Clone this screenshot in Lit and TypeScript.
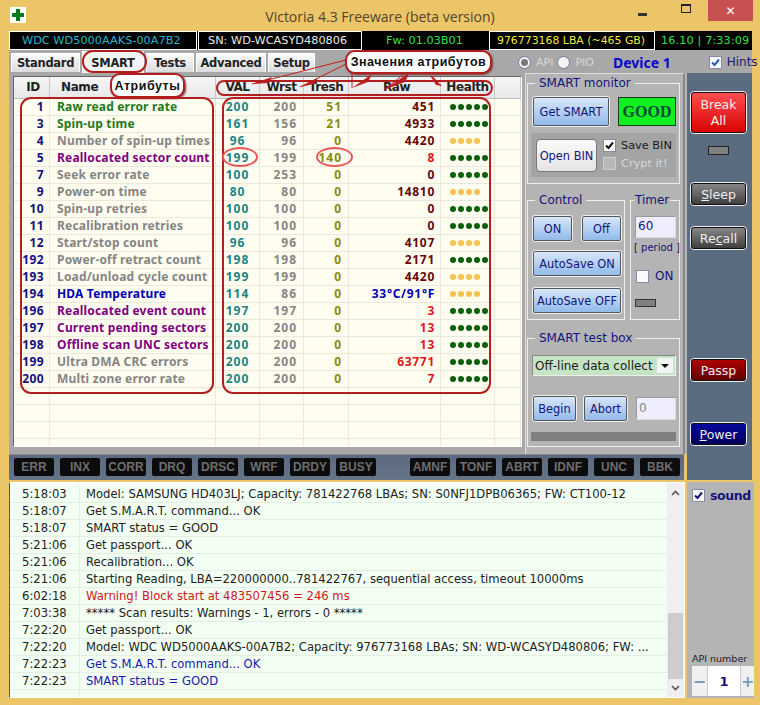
import { LitElement, html, css } from "lit";
import { customElement } from "lit/decorators.js";

type Row = [string, string, string, string, string, string, string, string, string];
const G = "#1c7a1c", N = "#858585", P = "#800080", B = "#0000b4", D = "#650808", R = "#e01818", Q = "#0000b4";
const rows: Row[] = [
  ["1", "Raw read error rate", G, "200", "200", "51", "451", D, "g"],
  ["3", "Spin-up time", G, "161", "156", "21", "4933", D, "g"],
  ["4", "Number of spin-up times", N, "96", "96", "0", "4420", D, "y"],
  ["5", "Reallocated sector count", P, "199", "199", "140", "8", R, "g"],
  ["7", "Seek error rate", N, "100", "253", "0", "0", D, "g"],
  ["9", "Power-on time", N, "80", "80", "0", "14810", D, "y"],
  ["10", "Spin-up retries", N, "100", "100", "0", "0", D, "g"],
  ["11", "Recalibration retries", N, "100", "100", "0", "0", D, "g"],
  ["12", "Start/stop count", N, "96", "96", "0", "4107", D, "y"],
  ["192", "Power-off retract count", N, "198", "198", "0", "2171", D, "g"],
  ["193", "Load/unload cycle count", N, "199", "199", "0", "4420", D, "y"],
  ["194", "HDA Temperature", B, "114", "86", "0", "33°C/91°F", Q, "y"],
  ["196", "Reallocated event count", P, "197", "197", "0", "3", R, "g"],
  ["197", "Current pending sectors", P, "200", "200", "0", "13", R, "g"],
  ["198", "Offline scan UNC sectors", P, "200", "200", "0", "13", R, "g"],
  ["199", "Ultra DMA CRC errors", N, "200", "200", "0", "63771", R, "g"],
  ["200", "Multi zone error rate", N, "200", "200", "0", "7", R, "g"],
];
const logs: [string, string, string][] = [
  ["5:18:03", "Model: SAMSUNG HD403LJ; Capacity: 781422768 LBAs; SN: S0NFJ1DPB06365; FW: CT100-12", "#222"],
  ["5:18:07", "Get S.M.A.R.T. command... OK", "#222"],
  ["5:18:07", "SMART status = GOOD", "#222"],
  ["5:21:06", "Get passport... OK", "#222"],
  ["5:21:06", "Recalibration... OK", "#222"],
  ["5:21:06", "Starting Reading, LBA=220000000..781422767, sequential access, timeout 10000ms", "#222"],
  ["6:02:18", "Warning! Block start at 483507456 = 246 ms", "#d01818"],
  ["7:03:38", "***** Scan results: Warnings - 1, errors - 0 *****", "#222"],
  ["7:22:20", "Get passport... OK", "#222"],
  ["7:22:20", "Model: WDC WD5000AAKS-00A7B2; Capacity: 976773168 LBAs; SN: WD-WCASYD480806; FW: ...", "#222"],
  ["7:22:23", "Get S.M.A.R.T. command... OK", "#1818b0"],
  ["7:22:23", "SMART status = GOOD", "#1818b0"],
  ["", "", "#222"],
];
const flagsA = ["ERR", "INX", "CORR", "DRQ", "DRSC", "WRF", "DRDY", "BUSY"];
const flagsB = ["AMNF", "TONF", "ABRT", "IDNF", "UNC", "BBK"];

@customElement("app-root")
export class AppRoot extends LitElement {
  static styles = css`
    :host { display: block; width: 760px; height: 705px; font-family: "DejaVu Sans", sans-serif; }
    * { box-sizing: border-box; }
    .win { position: relative; width: 760px; height: 705px; padding: 0 8px 7px 9px; display: flex; flex-direction: column;
      background: #ecc568; overflow: hidden; }
    .title { height: 31px; display: flex; align-items: center; flex: none; position: relative; margin: 0 -8px 0 -9px; padding-left: 10px; color: #4a3a20; }
    .logo { width: 16px; height: 16px; background: #fff; display: grid; place-items: center; flex: none; margin-top: -2px; }
    .ttext { flex: 1; text-align: center; font: 14px "Open Sans", sans-serif; margin-left: 114px; margin-top: 1px; color: #54442c; white-space: nowrap; }
    .caps { display: flex; align-items: flex-start; height: 31px; }
    .cap { width: 44px; height: 21px; display: grid; place-items: center; }
    .cap.close { width: 45px; background: #c75050; margin-right: 7px; color: #fff; font: bold 12px "DejaVu Sans"; }
    .min { width: 9px; height: 3px; background: #333; margin-top: 7px; }
    .max { width: 10px; height: 9px; border: 1px solid #222; border-top-width: 2px; margin-top: -5px; }
    .status { height: 19px; flex: none; display: flex; background: #000; font-size: 11.3px; line-height: 17px; gap: 1px; }
    .status div { border: 1px solid #fff; border-bottom: none; padding-left: 12px; white-space: nowrap; overflow: hidden; }
    .status .s1 { width: 188px; color: #28b4c8; border-bottom: 1px solid #fff; padding-left: 12px; }
    .status .s2 { width: 164px; color: #e8e8e8; border-bottom: 1px solid #fff; padding-left: 9px; }
    .status .s3 { width: 125px; color: #30e040; border: none; padding-left: 23px; line-height: 19px; }
    .status .s4 { width: 166px; color: #f0e840; border-bottom: 1px solid #fff; padding-left: 7px; font-size: 10.9px; }
    .status .s5 { flex: 1; color: #30e040; border: none; padding-left: 5px; line-height: 19px; letter-spacing: 0.1px; }
    .tabs { height: 23px; flex: none; background: #a8a8a8; display: flex; align-items: flex-end; padding-left: 2px; position: relative; }
    .tab { flex: none; height: 19px; background: linear-gradient(#fafafa, #dcdcdc); border: 1px solid #fff; border-bottom: none; font: bold 11.5px "DejaVu Sans"; letter-spacing: -0.3px;
      color: #222; display: grid; place-items: center; margin-right: 2px; margin-bottom: 1px; }
    .tab.on { height: 22px; margin-bottom: 0; background: #f4f4f4; }
    .opts { flex: none; display: flex; align-items: center; margin-left: 201px; height: 22px; font-size: 11px; color: #d8d8d8; white-space: nowrap; }
    .radio { width: 13px; height: 13px; border-radius: 50%; background: #f4f4f4; border: 1px solid #6a7a9a; flex: none; display: grid; place-items: center; }
    .radio i { width: 7px; height: 7px; border-radius: 50%; background: #777; display: block; }
    .api-l { margin: 0 4px 0 5px; }
    .pio-l { margin-left: 5px; }
    .dev { font: bold 14px "Noto Sans", sans-serif; color: #0808c8; margin-left: 19px; white-space: nowrap; }
    .chk { width: 13px; height: 13px; background: #fafafa; border: 1px solid #88a; display: grid; place-items: center; flex: none; }
    .chk svg { width: 11px; height: 11px; display: block; }
    .hints { margin-left: 38px; display: flex; align-items: center; gap: 5px; color: #1a1a70; font-size: 12px; white-space: nowrap; }
    .upper { height: 407px; flex: none; display: flex; }
    .lc { width: 678px; flex: none; display: flex; flex-direction: column; }
    .main { height: 381px; display: flex; background: #b4b4b4; flex: none; }
    .tp { width: 516px; padding: 3px 3px 7px 4px; flex: none; background: #a8a8a8; }
    .table { height: 100%; background: #fffdf0; border: 1px solid #666; border-right-color: #fff; border-bottom-color: #fff; overflow: hidden; }
    .hd, .rw { display: grid; grid-template-columns: 36px 166px 44px 44px 45px 92px 54px 1fr; }
    .hd { height: 22px; background: linear-gradient(#f6f6f6, #e8e8e8); font: bold 12px "DejaVu Sans"; letter-spacing: -0.4px; color: #222; border-bottom: 1px solid #bbb; }
    .hd span { border-right: 1px solid #c8c8c8; text-align: center; line-height: 20px; white-space: nowrap; }
    .hd .hid { padding-left: 3px; }
    .hd .hnm { text-align: left; padding-left: 11px; }
    .hd .hr { padding-left: 4px; }
    .rw { height: 17px; font: bold 12px "Noto Sans", sans-serif; line-height: 16px; }
    .rw span { border-right: 1px solid #ece9dc; border-bottom: 1px solid #ece9dc; padding: 0 2px; white-space: nowrap; overflow: hidden; }
    .id { text-align: right; color: #101080; padding-right: 5px !important; letter-spacing: 0.4px; }
    .nm { padding-left: 7px !important; letter-spacing: 0.18px; }
    .v { text-align: center; color: #208484; letter-spacing: 1px; }
    .w { text-align: right; color: #858585; padding-right: 6px !important; letter-spacing: 1px; }
    .t { text-align: right; color: #8a8a10; padding-right: 6px !important; letter-spacing: 1px; }
    .r { text-align: right; padding-right: 5px !important; letter-spacing: 0.7px; }
    .hl { display: flex; gap: 2px; align-items: center; padding-left: 9px !important; }
    .hl i { width: 6px; height: 6px; border-radius: 50%; display: block; flex: none; }
    .hl.g i { background: #0a620a; }
    .hl.y i { background: #f8c24a; }
    .rp { width: 160px; flex: none; background: #b4b4b4; border-left: 1px solid #ddd; border-top: 1px solid #ddd; padding: 9px 5px 0 1px; display: flex; flex-direction: column; border-right: 2px solid #888; }
    .grp { border: 1px solid #eee; position: relative; }
    .lg { position: absolute; top: -9px; left: 7px; padding: 0 4px; background: #b4b4b4; color: #14147a; font-size: 12px; line-height: 16px; white-space: nowrap; }
    .btn { background: linear-gradient(#dbe8fa, #8fb8ea); border: 1px solid #f0f0f0; outline: 1px solid #555; outline-offset: -2px; border-radius: 3px;
      display: grid; place-items: center; color: #14147a; font-size: 11.4px; white-space: nowrap; flex: none; }
    .sm { height: 101px; padding: 12px 3px 0 4px; width: 153px; }
    .sr { display: flex; gap: 8px; align-items: center; }
    .good { width: 58px; height: 29px; background: #10f020; border: 1px solid #1a3a1a; color: #0a4a3a; font: bold 16px "Liberation Serif", serif; display: grid; place-items: center; }
    .sub { margin: 6px 0 0 -1px; height: 44px; background: #a4a4a4; display: flex; padding: 6px 4px 0 5px; gap: 6px; width: 145px; }
    .open { width: 61px; height: 33px; background: linear-gradient(#fafafa, #e4e4e4); border-radius: 4px; border: 1px solid #777; color: #14147a; font-size: 11.4px; display: grid; place-items: center; flex: none; white-space: nowrap; }
    .cks { display: flex; flex-direction: column; gap: 6px; font-size: 11.3px; color: #1a1a1a; }
    .ck { display: flex; gap: 5px; align-items: center; white-space: nowrap; height: 12px; }
    .ck.dis { color: #d8d8d8; }
    .ck.dis .chk { background: #b8b8b8; border-color: #ccc; }
    .two { display: flex; gap: 5px; margin-top: 16px; }
    .ctl { width: 98px; height: 120px; padding: 14px 2px 0 4px; display: flex; flex-direction: column; gap: 8px; }
    .ctl .h { display: flex; gap: 8px; }
    .tm { width: 50px; height: 120px; padding: 15px 4px 0 4px; }
    .in { background: #eeeeff; border: 1px solid #999; border-right-color: #ddd; border-bottom-color: #ddd; font-size: 12px; color: #14147a; padding-left: 2px; }
    .per { font-size: 10px; color: #14147a; margin: 4px -3px 0 -1px; white-space: nowrap; text-align: center; }
    .tm .ck { margin-top: 17px; margin-left: 1px; color: #14147a; font-size: 12px; gap: 6px; }
    .ind { background: #808080; border: 1px solid #333; height: 8px; }
    .st { margin-top: 18px; width: 153px; height: 109px; padding: 16px 3px 0 4px; }
    .sel { height: 21px; width: 144px; background: #c4e4c4; border: 1px solid #888; border-bottom-color: #eee; border-right-color: #eee; display: flex; align-items: center; font-size: 12px; color: #1a1a1a; padding-left: 2px; white-space: nowrap; position: relative; }
    .arr { position: absolute; right: 2px; top: 2px; width: 16px; height: 15px; background: #f4f4f4; display: grid; place-items: center; }
    .arr i { width: 0; height: 0; border: 4px solid transparent; border-top: 4px solid #111; border-bottom: none; display: block; }
    .tr { display: flex; margin-top: 19px; gap: 6px; align-items: center; }
    .bar { margin-top: 10px; height: 9px; background: #808080; width: 145px; margin-left: -1px; }
    .flags { flex: 1; background: linear-gradient(#5b6a80, #667488); padding: 3px 0 0 5px; display: flex; border-top: 1px solid #888; margin-right: 3px; }
    .fl { flex: none; width: 40px; height: 18px; background: #0c0c0c; border-radius: 2px; color: #6e6e6e; font: bold 12px "Liberation Sans", sans-serif; display: grid; place-items: center; margin-right: 6px; }
    .flags .gap { flex: none; width: 28px; }
    .slate { flex: 1; background: #5b6b80; display: flex; flex-direction: column; align-items: center; padding: 18px 2px 0 0; }
    .sb { width: 57px; height: 24px; border: 1px solid #eee; outline: 1px solid #111; outline-offset: -2px; border-radius: 4px; background: linear-gradient(#8a8a8a, #3c3c3c); color: #eee; display: grid; place-items: center; font-size: 12.5px; flex: none; }
    .sb u { text-decoration: underline; }
    .break { height: 43px; background: linear-gradient(#ff5050, #d80000); text-align: center; line-height: 16px; }
    .led { width: 21px; height: 9px; background: #808080; border: 1px solid #222; margin-top: 12px; flex: none; }
    .passp { background: linear-gradient(#b00000, #600000); }
    .power { background: linear-gradient(#0808a0, #000058); }
    .lower { flex: 1; min-height: 0; display: flex; }
    .log { width: 676px; flex: none; background: #f2fff2; border: 1px solid #fff; border-left: 1px solid #555; display: flex; position: relative; overflow: hidden; margin-top: 2px; }
    .lines { flex: 1; padding-top: 3px; }
    .lr { display: grid; grid-template-columns: 70px 1fr; height: 17px; font-size: 11.6px; line-height: 16px; border-bottom: 1px solid #e2efe2; white-space: nowrap; }
    .lr span:first-child { border-right: 1px solid #e2efe2; padding-left: 12px; color: #222; }
    .lr span:last-child { padding-left: 6px; overflow: hidden; }
    .scr { width: 17px; flex: none; background: #efefef; display: flex; flex-direction: column; align-items: center; justify-content: space-between; position: relative; padding: 7px 0 6px; }
    .th { position: absolute; left: 1px; right: 1px; bottom: 18px; height: 66px; background: #cdcdcd; }
    .scr svg { width: 9px; height: 6px; display: block; position: relative; }
    .side { flex: 1; background: #b4b4b4; margin-top: 2px; margin-left: 2px; display: flex; flex-direction: column; padding: 6px 0 2px 5px; }
    .snd { display: flex; align-items: center; gap: 5px; font: bold 12.5px "DejaVu Sans"; letter-spacing: -0.4px; color: #14147a; }
    .api { margin-top: auto; font-size: 9.5px; color: #222; white-space: nowrap; margin-bottom: 2px; }
    .spin { display: grid; grid-template-columns: 15px 34px 1fr; height: 30px; background: #f0f0f0; overflow: hidden; }
    .spin span { display: grid; place-items: center; color: #7a9ac0; font: bold 16px "DejaVu Sans"; }
    .spin .n { background: #fff; color: #14147a; font-size: 13px; border-left: 1px solid #ccc; border-right: 1px solid #ccc; }
    .mark { position: absolute; border: 2px solid #b41e1e; border-radius: 11px; pointer-events: none; }
    .oval { position: absolute; border: 2px solid #e85858; border-radius: 50%; }
    .note { position: absolute; background: #fff; border: 2px solid #b41e1e; border-radius: 10px; box-shadow: 1px 1px 2px #7a3a3a; font: bold 12.5px "Liberation Sans", sans-serif; letter-spacing: 0.5px; color: #111; display: grid; place-items: center; white-space: nowrap; }
    .arrows { position: absolute; left: 0; top: 0; width: 760px; height: 705px; pointer-events: none; }
  `;

  private check(color = "#111") {
    return html`<svg viewBox="0 0 11 11"><path d="M2 5.5 4.5 8 9 2.5" fill="none" stroke=${color} stroke-width="2"/></svg>`;
  }

  render() {
    const tabs: [string, number][] = [["Standard", 69], ["SMART", 62], ["Tests", 48], ["Advanced", 70], ["Setup", 47]];
    return html`<div class="win">
      <div class="title">
        <div class="logo"><svg width="14" height="14" viewBox="0 0 14 14"><path d="M5 1h4v4h4v4H9v4H5V9H1V5h4z" fill="#0a7a1e"/></svg></div>
        <div class="ttext">Victoria 4.3 Freeware (beta version)</div>
        <div class="caps">
          <div class="cap"><div class="min"></div></div>
          <div class="cap"><div class="max"></div></div>
          <div class="cap close">✕</div>
        </div>
      </div>
      <div class="status">
        <div class="s1">WDC WD5000AAKS-00A7B2</div>
        <div class="s2">SN: WD-WCASYD480806</div>
        <div class="s3">Fw: 01.03B01</div>
        <div class="s4">976773168 LBA (~465 GB)</div>
        <div class="s5">16.10 | 7:33:09</div>
      </div>
      <div class="tabs">
        ${tabs.map(([t, w]) => html`<div class="tab ${t === "SMART" ? "on" : ""}" style="width:${w}px">${t}</div>`)}
        <div class="opts">
          <div class="radio"><i></i></div><span class="api-l">API</span>
          <div class="radio"></div><span class="pio-l">PIO</span>
          <span class="dev">Device 1</span>
          <div class="hints"><div class="chk">${this.check("#2a5ac0")}</div>Hints</div>
        </div>
      </div>
      <div class="upper">
        <div class="lc">
          <div class="main">
            <div class="tp">
              <div class="table">
                <div class="hd">
                  <span class="hid">ID</span><span class="hnm">Name</span><span>VAL</span><span>Wrst</span><span>Tresh</span><span class="hr">Raw</span><span>Health</span><span></span>
                </div>
                ${rows.map((r) => html`<div class="rw">
                  <span class="id">${r[0]}</span>
                  <span class="nm" style="color:${r[2]}">${r[1]}</span>
                  <span class="v">${r[3]}</span><span class="w">${r[4]}</span><span class="t">${r[5]}</span>
                  <span class="r" style="color:${r[7]}">${r[6]}</span>
                  <span class="hl ${r[8]}">${(r[8] === "g" ? [1, 2, 3, 4, 5] : [1, 2, 3, 4]).map(() => html`<i></i>`)}</span>
                  <span></span>
                </div>`)}
                ${[1, 2, 3, 4].map(() => html`<div class="rw"><span></span><span></span><span></span><span></span><span></span><span></span><span></span><span></span></div>`)}
              </div>
            </div>
            <div class="rp">
              <div class="grp sm">
                <div class="lg">SMART monitor</div>
                <div class="sr"><div class="btn" style="width:78px;height:31px">Get SMART</div><div class="good">GOOD</div></div>
                <div class="sub">
                  <div class="open">Open BIN</div>
                  <div class="cks">
                    <div class="ck"><div class="chk">${this.check()}</div>Save BIN</div>
                    <div class="ck dis"><div class="chk"></div>Crypt it!</div>
                  </div>
                </div>
              </div>
              <div class="two">
                <div class="grp ctl">
                  <div class="lg">Control</div>
                  <div class="h"><div class="btn" style="width:41px;height:27px">ON</div><div class="btn" style="width:41px;height:27px">Off</div></div>
                  <div class="btn" style="width:90px;height:27px">AutoSave ON</div>
                  <div class="btn" style="width:90px;height:27px;margin-top:2px">AutoSave OFF</div>
                </div>
                <div class="grp tm">
                  <div class="lg" style="left:3px;padding:0 1px">Timer</div>
                  <div class="in" style="width:41px;height:22px;line-height:18px">60</div>
                  <div class="per">[ period ]</div>
                  <div class="ck"><div class="chk"></div>ON</div>
                  <div class="ind" style="width:21px;margin-top:17px"></div>
                </div>
              </div>
              <div class="grp st">
                <div class="lg">SMART test box</div>
                <div class="sel">Off-line data collect<div class="arr"><i></i></div></div>
                <div class="tr">
                  <div class="btn" style="width:45px;height:27px">Begin</div>
                  <div class="btn" style="width:45px;height:27px">Abort</div>
                  <div class="in" style="width:40px;height:23px;margin-left:2px;color:#888;line-height:20px">0</div>
                </div>
                <div class="bar"></div>
              </div>
            </div>
          </div>
          <div class="flags">
            ${flagsA.map((f) => html`<div class="fl">${f}</div>`)}
            <div class="gap"></div>
            ${flagsB.map((f) => html`<div class="fl">${f}</div>`)}
          </div>
        </div>
        <div class="slate">
          <div class="sb break">Break<br />All</div>
          <div class="led"></div>
          <div class="sb" style="margin-top:27px"><span><u>S</u>leep</span></div>
          <div class="sb" style="margin-top:20px"><span>Re<u>c</u>all</span></div>
          <div class="sb passp" style="margin-top:108px">Passp</div>
          <div class="sb power" style="margin-top:40px"><span><u>P</u>ower</span></div>
        </div>
      </div>
      <div class="lower">
        <div class="log">
          <div class="lines">
            ${logs.map((l) => html`<div class="lr"><span>${l[0]}</span><span style="color:${l[2]}">${l[1]}</span></div>`)}
          </div>
          <div class="scr">
            <div class="th"></div>
            <svg viewBox="0 0 9 6"><path d="M1 5 4.5 1.5 8 5" fill="none" stroke="#555" stroke-width="1.6"/></svg>
            <svg viewBox="0 0 9 6"><path d="M1 1 4.5 4.5 8 1" fill="none" stroke="#555" stroke-width="1.6"/></svg>
          </div>
        </div>
        <div class="side">
          <div class="snd"><div class="chk">${this.check("#14147a")}</div>sound</div>
          <div class="api">API number</div>
          <div class="spin"><span>−</span><span class="n">1</span><span>+</span></div>
        </div>
      </div>

      <svg class="arrows" viewBox="0 0 760 705">
        <g fill="none" stroke="#c02020" stroke-width="1">
          <path d="M346 60 252 84M346 64 300 87M352 70 352 88M404 74 384 90M432 76 441 86" />
        </g>
        <g fill="#c02020">
          <path d="M252 84 272 77 268 83z" />
          <path d="M300 87 318 78 314 84z" />
          <path d="M352 88 372 74 368 82z" />
          <path d="M384 90 410 72 405 82z" />
          <path d="M429 74 442 86 436 85z" />
        </g>
      </svg>
      <div class="mark" style="left:82px;top:50px;width:65px;height:23px"></div>
      <div class="note" style="left:110px;top:73px;width:75px;height:25px">Атрибуты</div>
      <div class="note" style="left:345px;top:50px;width:147px;height:24px">Значения атрибутов</div>
      <div class="mark" style="left:216px;top:80px;width:277px;height:16px;border-radius:8px"></div>
      <div class="mark" style="left:20px;top:97px;width:194px;height:297px"></div>
      <div class="mark" style="left:222px;top:97px;width:269px;height:297px"></div>
      <div class="oval" style="left:222px;top:147px;width:36px;height:20px"></div>
      <div class="oval" style="left:316px;top:147px;width:37px;height:20px"></div>
    </div>`;
  }
}
